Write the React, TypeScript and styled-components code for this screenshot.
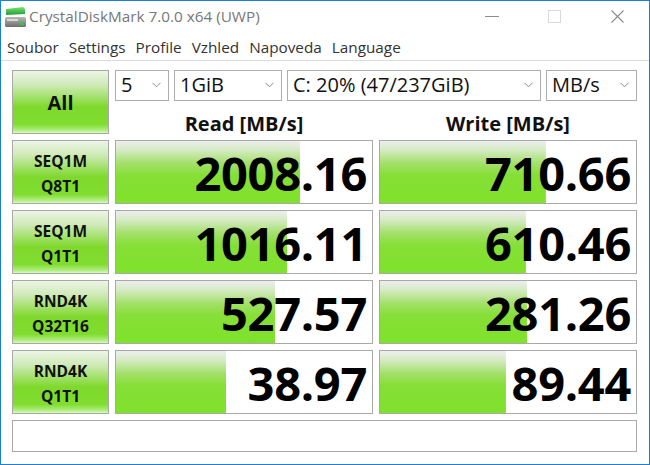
import React from "react";
import styled, { createGlobalStyle } from "styled-components";

const GlobalStyle = createGlobalStyle`
  html, body { margin: 0; padding: 0; background: #fff; }
  body { font-family: "Open Sans", "Noto Sans", sans-serif; }
  * { box-sizing: border-box; }
`;

const Window = styled.div`
  width: 650px;
  height: 465px;
  border: 1px solid #1a7fd6;
  background: #fff;
  display: flex;
  flex-direction: column;
  overflow: hidden;
`;

const TitleBar = styled.div`
  height: 31px;
  display: flex;
  align-items: center;
  flex-shrink: 0;
`;

const AppIcon = styled.div`
  width: 26px;
  height: 31px;
  display: flex;
  align-items: center;
  justify-content: center;
  margin-left: 1px;
`;

const Title = styled.div`
  flex: 1;
  font-size: 15.3px;
  color: #777;
  padding-left: 1px;
  padding-bottom: 1px;
`;

const CaptionButton = styled.div`
  width: 63px;
  height: 31px;
  display: flex;
  align-items: center;
  justify-content: center;
`;

const MenuBar = styled.div`
  height: 29px;
  display: flex;
  align-items: center;
  gap: 10px;
  padding-left: 6px;
  border-bottom: 1px solid #dcdcdc;
  flex-shrink: 0;
`;

const MenuItem = styled.span`
  font-size: 15.3px;
  color: #333;
  padding-top: 1px;
`;

const Content = styled.div`
  padding: 9px 11px 0 11px;
  display: grid;
  grid-template-columns: 97px 258px 258px;
  grid-template-rows: 64px 64px 64px 64px 64px 32px;
  column-gap: 6px;
  row-gap: 6px;
`;

const greenLabel = `linear-gradient(to bottom, #ecf5e6 0%, #cfeab8 22%, #9fe064 44%, #7ed92c 58%, #80dd2f 86%, #b2ef84 96%, #dcf8c6 100%)`;

const LabelButton = styled.div<{ $big?: boolean }>`
  border: 1px solid #a9a9a9;
  background: ${greenLabel};
  display: flex;
  flex-direction: column;
  align-items: center;
  justify-content: center;
  font-weight: 700;
  color: #111;
  font-size: ${(p) => (p.$big ? "20px" : "15.5px")};
  line-height: ${(p) => (p.$big ? "24px" : "25px")};
  padding-top: ${(p) => (p.$big ? "1px" : "4px")};
`;

const TopRight = styled.div`
  grid-column: 2 / span 2;
  display: flex;
  flex-direction: column;
`;

const ComboRow = styled.div`
  display: flex;
  gap: 5px;
  height: 31px;
`;

const Combo = styled.div<{ $w: number }>`
  width: ${(p) => p.$w}px;
  height: 31px;
  border: 1px solid #adadad;
  background: #fff;
  display: flex;
  align-items: center;
  justify-content: space-between;
  padding: 0 7px 2px 5px;
  font-size: 20px;
  color: #111;
  white-space: nowrap;
`;

const HeaderRow = styled.div`
  flex: 1;
  display: grid;
  grid-template-columns: 258px 258px;
  column-gap: 6px;
  padding-top: 12px;
`;

const Header = styled.div`
  text-align: center;
  font-weight: 700;
  font-size: 20px;
  line-height: 22px;
  color: #111;
`;

const barGradient = `linear-gradient(to bottom, #eeeeee 0%, #d6ebc6 14%, #a3e06b 36%, #86df37 55%, #7fe22b 100%)`;

const ResultCell = styled.div`
  border: 1px solid #a9a9a9;
  background-color: #fff;
  background-image: ${barGradient};
  background-repeat: no-repeat;
  display: flex;
  align-items: center;
  justify-content: flex-end;
  padding: 1px 5px 0 0;
  font-weight: 700;
  font-size: 47px;
  letter-spacing: -0.3px;
  color: #000;
`;

const Comment = styled.div`
  grid-column: 1 / span 3;
  border: 1px solid #a9a9a9;
  background: #fff;
`;

const Chevron = () => (
  <svg width="9" height="6" viewBox="0 0 9 6">
    <polyline points="0.5,0.8 4.5,4.8 8.5,0.8" fill="none" stroke="#8a8a8a" strokeWidth="1" />
  </svg>
);

const rows = [
  { l1: "SEQ1M", l2: "Q8T1", read: "2008.16", rp: 71.9, write: "710.66", wp: 64.8 },
  { l1: "SEQ1M", l2: "Q1T1", read: "1016.11", rp: 66.8, write: "610.46", wp: 57.0 },
  { l1: "RND4K", l2: "Q32T16", read: "527.57", rp: 62.1, write: "281.26", wp: 57.4 },
  { l1: "RND4K", l2: "Q1T1", read: "38.97", rp: 43.0, write: "89.44", wp: 49.2 },
];

const combos = [
  { w: 54, t: "5" },
  { w: 108, t: "1GiB" },
  { w: 254, t: "C: 20% (47/237GiB)" },
  { w: 91, t: "MB/s" },
];

export default function App() {
  return (
    <>
      <GlobalStyle />
      <Window>
        <TitleBar>
          <AppIcon>
            <svg width="23" height="22" viewBox="0 0 23 22">
              <defs>
                <linearGradient id="gtop" x1="0" y1="0" x2="0" y2="1">
                  <stop offset="0" stopColor="#7be36a" />
                  <stop offset="1" stopColor="#1f9e3a" />
                </linearGradient>
                <linearGradient id="gdrv" x1="0" y1="0" x2="0" y2="1">
                  <stop offset="0" stopColor="#b8b8b8" />
                  <stop offset="1" stopColor="#6e6e6e" />
                </linearGradient>
              </defs>
              <path d="M2 3 L19 1 L21 3 L21 8 L2 9 Z" fill="url(#gtop)" />
              <rect x="1" y="11" width="21" height="10" rx="1.5" fill="url(#gdrv)" />
              <rect x="3" y="13" width="11" height="2" fill="#d8d8d8" />
              <rect x="16" y="16" width="4" height="3" fill="#3fc34a" />
            </svg>
          </AppIcon>
          <Title>CrystalDiskMark 7.0.0 x64 (UWP)</Title>
          <CaptionButton>
            <svg width="14" height="2" viewBox="0 0 14 2">
              <rect x="0" y="0" width="14" height="1" fill="#8c8c8c" />
            </svg>
          </CaptionButton>
          <CaptionButton>
            <svg width="13" height="13" viewBox="0 0 13 13">
              <rect x="0.5" y="0.5" width="12" height="12" fill="none" stroke="#d9d9d9" />
            </svg>
          </CaptionButton>
          <CaptionButton>
            <svg width="13" height="13" viewBox="0 0 13 13">
              <path d="M0.5 0.5 L12.5 12.5 M12.5 0.5 L0.5 12.5" stroke="#8a8a8a" strokeWidth="1.1" />
            </svg>
          </CaptionButton>
        </TitleBar>
        <MenuBar>
          {["Soubor", "Settings", "Profile", "Vzhled", "Napoveda", "Language"].map((m) => (
            <MenuItem key={m}>{m}</MenuItem>
          ))}
        </MenuBar>
        <Content>
          <LabelButton $big>All</LabelButton>
          <TopRight>
            <ComboRow>
              {combos.map((c) => (
                <Combo key={c.t} $w={c.w}>
                  <span>{c.t}</span>
                  <Chevron />
                </Combo>
              ))}
            </ComboRow>
            <HeaderRow>
              <Header>Read [MB/s]</Header>
              <Header>Write [MB/s]</Header>
            </HeaderRow>
          </TopRight>
          {rows.map((r, i) => (
            <React.Fragment key={i}>
              <LabelButton>
                <span>{r.l1}</span>
                <span>{r.l2}</span>
              </LabelButton>
              <ResultCell style={{ backgroundSize: `${r.rp}% 100%` }}>{r.read}</ResultCell>
              <ResultCell style={{ backgroundSize: `${r.wp}% 100%` }}>{r.write}</ResultCell>
            </React.Fragment>
          ))}
          <Comment />
        </Content>
      </Window>
    </>
  );
}
